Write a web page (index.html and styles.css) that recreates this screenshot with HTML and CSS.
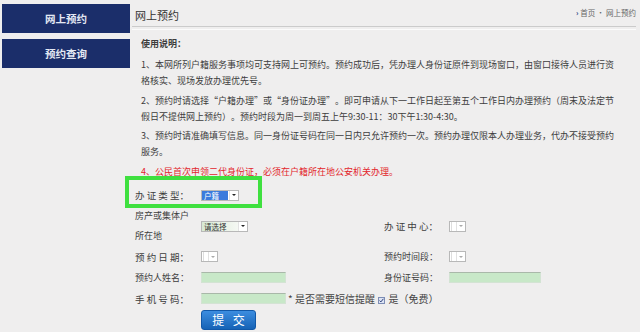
FILE: index.html
```html
<!DOCTYPE html>
<html lang="zh-CN">
<head>
  <meta charset="UTF-8" />
  <meta name="viewport" content="width=device-width, initial-scale=1.0"/>
  <title>网上预约</title>
  <link rel="stylesheet" href="styles.css">
</head>
<body>

  <div class="wrap">
    <!-- Side menu -->
    <nav class="side">
      <a class="nav-item">网上预约</a>
      <a class="nav-item">预约查询</a>
    </nav>

    <main class="main">
      <div class="head">
        <div class="head-row">
          <h2 class="title">网上预约</h2>
          <div class="crumb"><span class="crumb-arrow">›</span> 首页 · 网上预约</div>
        </div>
      </div>

      <!-- Notes -->
      <div class="notes">
        <p class="notes-title">使用说明：</p>
        <p>1、本网所列户籍服务事项均可支持网上可预约。预约成功后，凭办理人身份证原件到现场窗口，由窗口接待人员进行资格核实、现场发放办理优先号。</p>
        <p>2、预约时请选择“户籍办理”或“身份证办理”。即可申请从下一工作日起至第五个工作日内办理预约（周末及法定节假日不提供网上预约）。预约时段为周一到周五上午9:30-11：30下午1:30-4:30。</p>
        <p>3、预约时请准确填写信息。同一身份证号码在同一日内只允许预约一次。预约办理仅限本人办理业务，代办不接受预约服务。</p>
        <p class="warn">4、公民首次申领二代身份证，必须在户籍所在地公安机关办理。</p>
      </div>

      <!-- Booking form -->
      <div class="form">
        <div class="row row-type">
          <span class="mark"></span>
          <span class="label wide">办 证 类 型：</span>
          <span class="sel sel-type"><span class="sel-val on">户籍</span><span class="sel-btn"></span></span>
        </div>

        <div class="row row-tall">
          <span class="label">房产或集体户<br>所在地</span>
          <span class="sel sel-area"><span class="sel-val">请选择</span><span class="sel-btn"></span></span>
          <span class="label wide">办 证 中 心：</span>
          <span class="sel sel-mini"><span class="sel-val"></span><span class="sel-btn light"></span></span>
        </div>

        <div class="row">
          <span class="label wide">预 约 日 期：</span>
          <span class="sel sel-mini"><span class="sel-val"></span><span class="sel-btn light"></span></span>
          <span class="label">预约时间段：</span>
          <span class="sel sel-mini"><span class="sel-val"></span><span class="sel-btn light"></span></span>
        </div>

        <div class="row">
          <span class="label">预约人姓名：</span>
          <span><input class="field" type="text"></span>
          <span class="label">身份证号码：</span>
          <span><input class="field field-id" type="text"></span>
        </div>

        <div class="row">
          <span class="label wide">手 机 号 码：</span>
          <span class="phone">
            <input class="field" type="text">
            <span class="sms">* 是否需要短信提醒
              <svg class="check" width="7" height="7" viewBox="0 0 7 7">
                <rect x="0.5" y="0.5" width="6" height="6" fill="#dde4f4" stroke="#7d8db5"/>
                <path d="M1.6 3.6 L2.9 4.9 L5.4 1.8" fill="none" stroke="#2b3f7a" stroke-width="1"/>
              </svg>
              是（免费）</span>
          </span>
        </div>

        <div class="row">
          <span></span>
          <span><button class="submit">提 交</button></span>
        </div>
      </div>
    </main>
  </div>

</body>
</html>
```

FILE: styles.css
```css
body {
  margin: 0; padding: 0; background: #efeeee; color: #3d3d3d;
  font-family: "Noto Sans CJK SC", "Liberation Sans", sans-serif;
  text-spacing-trim: space-all;
}
p, h2 { margin: 0; }

.wrap { display: flex; height: 332px; overflow: hidden; }

/* side menu */
.side {
  width: 128px; margin: 4px 0 0 2px;
  display: flex; flex-direction: column; gap: 6px;
}
.nav-item {
  display: block; height: 29px; line-height: 29px; text-align: center;
  background: #1b2e6a; color: #e3e8f3; font-size: 10.5px; font-weight: bold;
}

/* main */
.main { flex: 1; margin: 0 4px 0 2px; }
.head { padding-bottom: 2px; border-bottom: 1px solid #fbfbfb; }
.head-row {
  height: 26px; border-bottom: 1px solid #cbcbcb;
  display: flex; justify-content: space-between; align-items: flex-start;
}
.title {
  font-size: 11px; font-weight: normal; color: #333;
  line-height: 15px; padding: 8px 0 0 3px;
}
.crumb {
  font-size: 7.5px; color: #666; line-height: 10px; padding-top: 8px;
}
.crumb-arrow { color: #24427f; font-weight: bold; }

.notes {
  padding: 6px 15px 0 9px;
  font-size: 9px; line-height: 16px;
}
.notes p { margin-bottom: 3.5px; }
.notes .notes-title { font-weight: bold; margin-bottom: 5px; }
.notes .warn { color: #e3262c; }

/* form */
.form { padding: 1px 0 0 3px; }
.row {
  display: grid; grid-template-columns: 66px 183px 65px 1fr;
  align-items: center; height: 21px;
  font-size: 9px;
}
.row-type { height: 22px; position: relative; }
.row-tall { height: 40px; line-height: 20px; }
.label { white-space: nowrap; }
.label.wide { font-size: 9.5px; }

.mark {
  position: absolute; left: -10px; top: -8px;
  width: 137px; height: 32px; box-sizing: border-box;
  border: 4px solid #3fe03f;
}

.sel {
  display: inline-flex; height: 11px; box-sizing: border-box;
  border: 1px solid #b8b8b8; background: #fff; vertical-align: middle;
}
.sel-val { flex: 1; font-size: 7.5px; line-height: 9px; padding: 0 2px; white-space: nowrap; }
.sel-btn {
  width: 8px; display: flex; align-items: center; justify-content: center;
  border-left: 1px solid #e2e2e2;
}
.sel-btn::after {
  content: ""; border-left: 2px solid transparent; border-right: 2px solid transparent;
  border-top: 2.5px solid #222;
}
.sel-btn.light::after { border-top-color: #aaa; }
.sel-type { width: 38px; }
.sel-type .on { background: #3b7bdc; color: #fff; margin-right: 1px; }
.sel-area { width: 47px; }
.sel-area .sel-val { background: linear-gradient(to right, #d8e9d4, #f5f8f3); color: #333; }
.sel-mini { width: 17px; }
.sel-mini .sel-val { border-left: 1px solid #ddd; margin-left: 1px; }

.field {
  display: block; width: 85px; height: 11px; box-sizing: border-box; padding: 0;
  background: #c8e8c8; border: 1px solid #d3e3d3; border-top-color: #a9b8a9;
}
.field-id { width: 92px; }

.phone { grid-column: 2 / 5; display: flex; align-items: center; }
.sms { margin-left: 2px; font-size: 10px; white-space: nowrap; color: #444; }
.check { vertical-align: -1px; margin: 0 1px; }

.submit {
  width: 55px; height: 20px; padding: 0; border-radius: 3px;
  border: 1px solid #1158a8; background: linear-gradient(#3c8de0, #1663b6);
  color: #fff; font-family: inherit; font-size: 12px; letter-spacing: 3px; text-indent: 3px;
  line-height: 18px;
}
```
